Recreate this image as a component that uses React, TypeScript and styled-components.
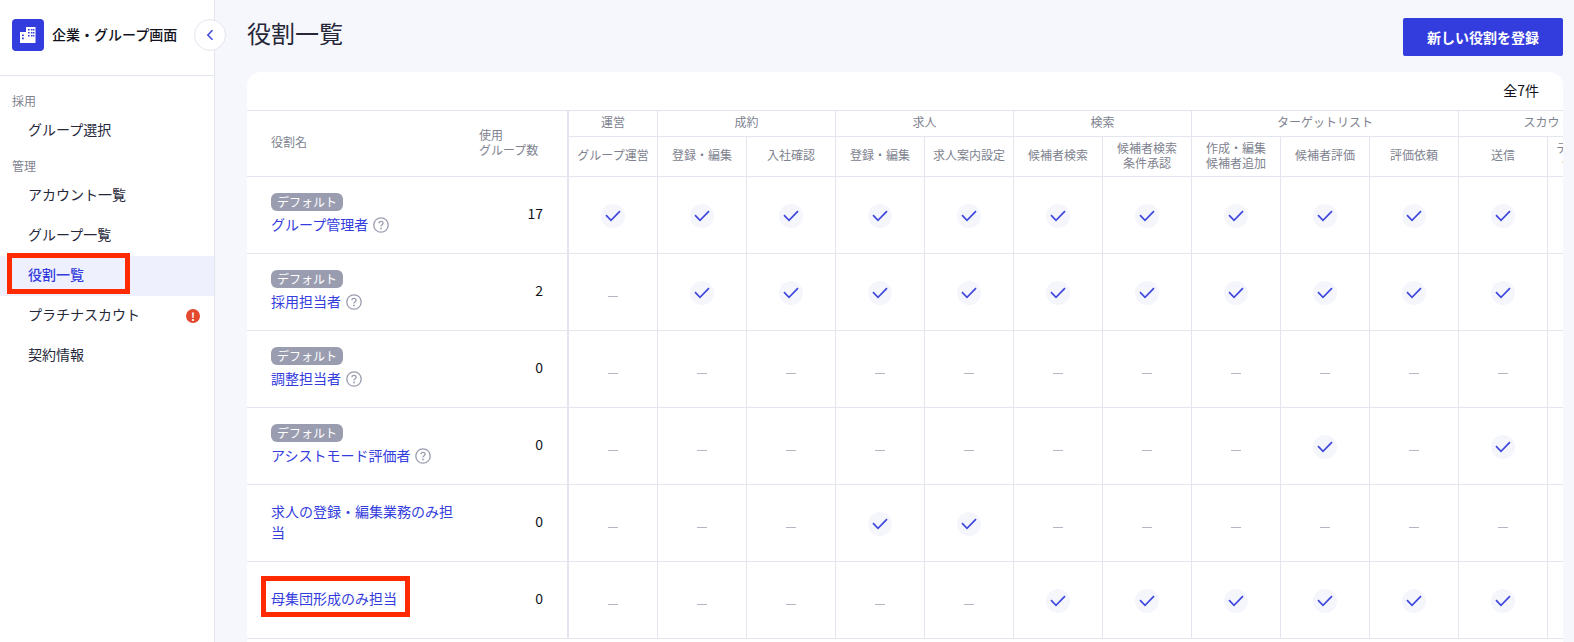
import { styled, createGlobalStyle } from 'styled-components';

const GROUPS = [
  { label: '運営', span: 1 },
  { label: '成約', span: 2 },
  { label: '求人', span: 2 },
  { label: '検索', span: 2 },
  { label: 'ターゲットリスト', span: 3 },
  { label: 'スカウト', span: 2 },
];

const PERMISSIONS = [
  ['グループ運営'],
  ['登録・編集'],
  ['入社確認'],
  ['登録・編集'],
  ['求人案内設定'],
  ['候補者検索'],
  ['候補者検索', '条件承認'],
  ['作成・編集', '候補者追加'],
  ['候補者評価'],
  ['評価依頼'],
  ['送信'],
  ['テンプレート', '作成・編集'],
];

const ROLES = [
  { name: 'グループ管理者', isDefault: true, count: 17, checks: [0, 1, 2, 3, 4, 5, 6, 7, 8, 9, 10, 11] },
  { name: '採用担当者', isDefault: true, count: 2, checks: [1, 2, 3, 4, 5, 6, 7, 8, 9, 10, 11] },
  { name: '調整担当者', isDefault: true, count: 0, checks: [] },
  { name: 'アシストモード評価者', isDefault: true, count: 0, checks: [8, 10] },
  { name: '求人の登録・編集業務のみ担当', isDefault: false, count: 0, checks: [3, 4] },
  { name: '母集団形成のみ担当', isDefault: false, count: 0, checks: [5, 6, 7, 8, 9, 10], marked: true },
];

const App = () => (
  <Page>
    <GlobalStyle />
    <Sidebar>
      <Brand>
        <BrandLogo>
          <svg width="32" height="32" viewBox="0 0 32 32" aria-hidden="true">
            <path
              fill="#fff"
              fillRule="evenodd"
              d="M8 13h6V8h9.5v16H8z M16 10v1.6h1.6V10z M18.9 10v1.6h1.6V10z M21 10v1.6h1.4V10z M16 13v1.6h1.6V13z M18.9 13v1.6h1.6V13z M21 13v1.6h1.4V13z M16 16v1.6h1.6V16z M18.9 16v1.6h1.6V16z M21 16v1.6h1.4V16z M10 15.4V17h1.8v-1.6z M10 18.6v1.6h1.8v-1.6z"
            />
          </svg>
        </BrandLogo>
        <BrandName>企業・グループ画面</BrandName>
        <CollapseButton type="button" aria-label="閉じる">
          <svg width="10" height="12" viewBox="0 0 10 12" aria-hidden="true">
            <path d="M7.5 1.2 2.8 6l4.7 4.8" fill="none" stroke="#3f48dd" strokeWidth="1.5" />
          </svg>
        </CollapseButton>
      </Brand>
      <Nav>
        <NavLabel>採用</NavLabel>
        <NavItem>グループ選択</NavItem>
        <NavLabel $second>管理</NavLabel>
        <NavItem>アカウント一覧</NavItem>
        <NavItem>グループ一覧</NavItem>
        <NavItem $active>
          役割一覧
          <NavMark />
        </NavItem>
        <NavItem>
          プラチナスカウト
          <Alert>!</Alert>
        </NavItem>
        <NavItem>契約情報</NavItem>
      </Nav>
    </Sidebar>
    <Main>
      <Header>
        <Title>役割一覧</Title>
        <PrimaryButton type="button">新しい役割を登録</PrimaryButton>
      </Header>
      <Card>
        <Toolbar>全7件</Toolbar>
        <Table>
          <colgroup>
            <col style={{ width: 208 }} />
            <col style={{ width: 114 }} />
            {PERMISSIONS.map((_, i) => (
              <col key={i} style={{ width: 89 }} />
            ))}
          </colgroup>
          <thead>
            <GroupRow>
              <NameHead rowSpan={2}>役割名</NameHead>
              <CountHead rowSpan={2}>
                使用
                <br />
                グループ数
              </CountHead>
              {GROUPS.map((group) => (
                <HeadCell key={group.label} colSpan={group.span}>
                  {group.label}
                </HeadCell>
              ))}
            </GroupRow>
            <PermissionRow>
              {PERMISSIONS.map((lines, i) => (
                <HeadCell key={i}>
                  {lines.map((line, j) => (
                    <HeadLine key={j}>{line}</HeadLine>
                  ))}
                </HeadCell>
              ))}
            </PermissionRow>
          </thead>
          <tbody>
            {ROLES.map((role) => (
              <BodyRow key={role.name}>
                <NameCell>
                  {role.isDefault && <Badge>デフォルト</Badge>}
                  <RoleLine>
                    <RoleLink href="#">{role.name}</RoleLink>
                    {role.isDefault && <HelpIcon />}
                    {role.marked && <RoleMark />}
                  </RoleLine>
                </NameCell>
                <CountCell>{role.count}</CountCell>
                {PERMISSIONS.map((_, i) => (
                  <StatusCell key={i}>{role.checks.includes(i) ? <CheckMark /> : <Dash />}</StatusCell>
                ))}
              </BodyRow>
            ))}
          </tbody>
        </Table>
      </Card>
    </Main>
  </Page>
);

export default App;

const HelpIcon = () => (
  <HelpWrap>
    <svg width="16" height="16" viewBox="0 0 16 16" aria-hidden="true">
      <circle cx="8" cy="8" r="7.2" fill="none" stroke="#9a9db0" strokeWidth="1.3" />
      <path
        d="M5.9 6.3c0-1.2 1-2 2.1-2s2.1.8 2.1 1.9c0 1.600-2.100 1.600-2.100 3.300"
        fill="none"
        stroke="#9a9db0"
        strokeWidth="1.3"
      />
      <circle cx="8" cy="11.500" r=".9" fill="#9a9db0" />
    </svg>
  </HelpWrap>
);

const CheckMark = () => (
  <CheckCircle>
    <svg width="24" height="24" viewBox="0 0 24 24" aria-hidden="true">
      <path d="M5 11.200 10 16.300 19 7.200" fill="none" stroke="#3f48dd" strokeWidth="1.700" />
    </svg>
  </CheckCircle>
);

const GlobalStyle = createGlobalStyle`
  * {
    box-sizing: border-box;
  }

  html,
  body {
    height: 100%;
    margin: 0;
    overflow: hidden;
  }

  body {
    font-family: 'Noto Sans CJK JP', 'Noto Sans', sans-serif;
    color: #1f2130;
    background-color: #f6f7fc;
  }
`;

const Page = styled.div`
  display: flex;

  width: 100%;
  height: 100vh;
  overflow: hidden;
`;

const Sidebar = styled.aside`
  flex: 0 0 215px;

  background-color: #fff;
  border-right: 1px solid #e4e6ef;
`;

const Brand = styled.div`
  position: relative;

  display: flex;
  gap: 8px;
  align-items: center;

  height: 76px;
  padding: 0 12px 5px;

  border-bottom: 1px solid #e4e6ef;
`;

const BrandLogo = styled.div`
  display: flex;
  align-items: center;
  justify-content: center;

  width: 32px;
  height: 32px;

  background-color: #333cdd;
  border-radius: 4px;
`;

const BrandName = styled.span`
  padding-bottom: 3px;

  font-size: 14px;
  font-weight: 500;
  color: #12131c;
  white-space: nowrap;
`;

const CollapseButton = styled.button`
  position: absolute;
  top: 19px;
  left: 194px;
  z-index: 1;

  display: flex;
  align-items: center;
  justify-content: center;

  width: 32px;
  height: 32px;
  padding: 0;

  background-color: #fff;
  border: 1px solid #e4e6ef;
  border-radius: 50%;
`;

const Nav = styled.nav`
  display: flex;
  flex-direction: column;

  padding-top: 17px;
`;

const NavLabel = styled.div<{ $second?: boolean }>`
  height: 18px;
  margin-top: ${({ $second }) => ($second ? '7px' : '0')};
  padding: 0 0 3px 12px;

  font-size: 12px;
  line-height: 15px;
  color: #80838f;
`;

const NavItem = styled.div<{ $active?: boolean }>`
  position: relative;

  display: flex;
  align-items: center;

  height: 40px;
  padding: 0 0 4px 28px;

  font-size: 14px;
  font-weight: ${({ $active }) => ($active ? 500 : 400)};
  color: ${({ $active }) => ($active ? '#333cdd' : '#26283a')};

  background-color: ${({ $active }) => ($active ? '#eff0fd' : 'transparent')};
`;

const NavMark = styled.span`
  position: absolute;
  top: -3px;
  left: 7px;

  width: 123px;
  height: 41px;

  border: 5px solid #ff2a00;
`;

const Alert = styled.span`
  position: absolute;
  top: 13px;
  left: 186px;

  display: flex;
  align-items: center;
  justify-content: center;

  width: 14px;
  height: 14px;

  font-size: 11px;
  font-weight: 700;
  color: #fff;

  background-color: #e2492f;
  border-radius: 50%;
`;

const Main = styled.main`
  display: flex;
  flex: 1;
  flex-direction: column;

  min-width: 0;
  padding: 0 11px 0 32px;
`;

const Header = styled.header`
  display: flex;
  flex: 0 0 72px;
  align-items: flex-start;
  justify-content: space-between;

  padding-top: 18px;
`;

const Title = styled.h1`
  margin: 0;

  font-size: 24px;
  font-weight: 400;
  line-height: 30px;
  color: #26283a;
`;

const PrimaryButton = styled.button`
  width: 160px;
  height: 38px;
  padding: 0;

  font-family: inherit;
  font-size: 14px;
  font-weight: 700;
  color: #fff;

  background-color: #333cdd;
  border: none;
  border-radius: 2px;
`;

const Card = styled.section`
  overflow: hidden;
  flex: 1;

  min-height: 0;

  background-color: #fff;
  border-radius: 14px 14px 0 0;
`;

const Toolbar = styled.div`
  display: flex;
  align-items: center;
  justify-content: flex-end;

  height: 39px;
  padding: 0 24px 3px 0;

  font-size: 14px;
  color: #12131c;

  border-bottom: 1px solid #e4e6ef;
`;

const Table = styled.table`
  table-layout: fixed;
  border-spacing: 0;
  border-collapse: separate;

  width: 1390px;
`;

const GroupRow = styled.tr`
  height: 26px;
`;

const PermissionRow = styled.tr`
  height: 40px;
`;

const BodyRow = styled.tr`
  height: 77px;
`;

const NameHead = styled.th`
  padding: 0 0 4px 24px;

  font-size: 12px;
  font-weight: 400;
  color: #80838f;
  text-align: left;

  border-bottom: 1px solid #e4e6ef;
`;

const CountHead = styled.th`
  padding: 0 0 4px 24px;

  font-size: 12px;
  font-weight: 400;
  line-height: 15px;
  color: #80838f;
  text-align: left;

  border-right: 2px solid #e4e6ef;
  border-bottom: 1px solid #e4e6ef;
`;

const HeadCell = styled.th`
  padding: 0 0 4px;

  font-size: 12px;
  font-weight: 400;
  line-height: 15px;
  color: #80838f;
  text-align: center;
  white-space: nowrap;

  border-right: 1px solid #e4e6ef;
  border-bottom: 1px solid #e4e6ef;
`;

const HeadLine = styled.div``;

const NameCell = styled.td`
  padding: 0 0 3px 24px;

  border-bottom: 1px solid #e4e6ef;
`;

const Badge = styled.span`
  display: block;

  width: 72px;
  height: 18px;
  margin-bottom: 3px;

  font-size: 12px;
  line-height: 17px;
  color: #fff;
  text-align: center;

  background-color: #9a9db0;
  border-radius: 6px;
`;

const RoleLine = styled.div`
  position: relative;

  font-size: 14px;
  line-height: 21px;
`;

const RoleLink = styled.a`
  color: #333cdd;
  text-decoration: none;
`;

const RoleMark = styled.span`
  position: absolute;
  top: -12px;
  left: -10px;

  width: 149px;
  height: 41px;

  border: 5px solid #ff2a00;
`;

const HelpWrap = styled.span`
  display: inline-flex;
  margin-left: 5px;
  vertical-align: -3px;
`;

const CountCell = styled.td`
  padding: 0 24px 4px 0;

  font-size: 14px;
  color: #12131c;
  text-align: right;

  border-right: 2px solid #e4e6ef;
  border-bottom: 1px solid #e4e6ef;
`;

const StatusCell = styled.td`
  padding: 0;

  text-align: center;

  border-right: 1px solid #e4e6ef;
  border-bottom: 1px solid #e4e6ef;
`;

const CheckCircle = styled.span`
  display: inline-flex;

  width: 24px;
  height: 24px;
  vertical-align: middle;

  background-color: #f5f6fc;
  border-radius: 50%;
`;

const Dash = styled.span`
  display: inline-block;

  width: 10px;
  height: 1px;
  margin-top: 4px;
  vertical-align: middle;

  background-color: #b4b6c4;
`;
